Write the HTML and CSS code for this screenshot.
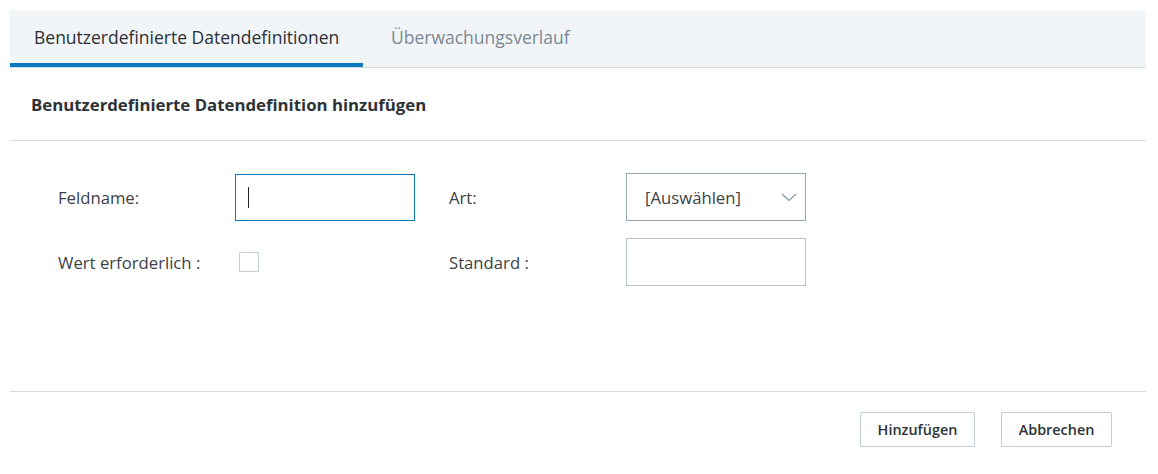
FILE: index.html
```html
<!DOCTYPE html>
<html lang="de">
<head>
<meta charset="utf-8">
<title>Benutzerdefinierte Datendefinitionen</title>
<link rel="stylesheet" href="styles.css">
</head>
<body>
<div class="panel">
  <div class="tabs">
    <div class="tab active">Benutzerdefinierte Datendefinitionen</div>
    <div class="tab">Überwachungsverlauf</div>
  </div>
  <div class="header">Benutzerdefinierte Datendefinition hinzufügen</div>
  <div class="form">
    <div class="row">
      <div class="cell">
        <label class="label">Feldname:</label>
        <div class="input focused"><span class="caret"></span></div>
      </div>
      <div class="cell">
        <label class="label">Art:</label>
        <div class="input select">
          <span>[Auswählen]</span>
          <svg class="chev" width="16" height="9" viewBox="0 0 16 9"><path d="M1 1 L8 7.5 L15 1" fill="none" stroke="#8a96a3" stroke-width="1.2"/></svg>
        </div>
      </div>
    </div>
    <div class="row">
      <div class="cell">
        <label class="label">Wert erforderlich :</label>
        <div class="check-wrap"><span class="checkbox"></span></div>
      </div>
      <div class="cell">
        <label class="label">Standard :</label>
        <div class="input"></div>
      </div>
    </div>
  </div>
  <div class="footer">
    <button class="btn">Hinzufügen</button>
    <button class="btn">Abbrechen</button>
  </div>
</div>
</body>
</html>
```

FILE: styles.css
```css
* { box-sizing: border-box; }
html, body { margin: 0; padding: 0; background: #fff; }
body {
  padding: 10px 12px 0 10px;
  font-family: "Open Sans", "Noto Sans", sans-serif;
  color: #333a40;
}
.panel { width: 1136px; }
.tabs {
  display: flex;
  background: #f1f5f8;
  border-bottom: 1px solid #d5dde3;
  height: 58px;
}
.tab {
  padding: 0 24px 0 28px;
  font-size: 17.5px;
  line-height: 55px;
  color: #7c8894;
  border-bottom: 4px solid transparent;
  height: 57px;
  white-space: nowrap;
}
.tab.active {
  width: 353px;
  padding-left: 24px;
  color: #2b3034;
  border-bottom-color: #0a78ba;
}
.header {
  padding: 0 21px;
  height: 73px;
  line-height: 73px;
  font-size: 16.8px;
  font-weight: 700;
  color: #2d3236;
  border-bottom: 1px solid #d5dde3;
}
.form {
  padding: 32px 0 0 48px;
  height: 251px;
  border-bottom: 1px solid #d5dde3;
  display: flex;
  flex-direction: column;
  gap: 17px;
}
.row { display: flex; }
.cell { display: flex; align-items: center; width: 391px; }
.label {
  width: 177px;
  font-size: 16.7px;
  color: #3b4247;
  white-space: nowrap;
}
.input {
  width: 180px;
  height: 48px;
  border: 1px solid #b9c3cc;
  background: #fff;
  display: flex;
  align-items: center;
}
.input.focused { border-color: #0a78ba; margin-top: 1px; height: 47px; }
.caret {
  display: block;
  width: 1px;
  height: 21px;
  background: #222;
  margin-left: 12px;
}
.select {
  justify-content: space-between;
  padding: 0 8px 0 18px;
  font-size: 16.7px;
  color: #3b4247;
  border-color: #96a5b3;
}
.chev { display: block; }
.check-wrap { height: 48px; display: flex; align-items: center; }
.checkbox {
  display: block;
  width: 20px;
  height: 20px;
  margin-left: 4px;
  border: 1px solid #c9d1d8;
  background: #fff;
}
.footer {
  display: flex;
  justify-content: flex-end;
  gap: 26px;
  padding: 20px 34px 0 0;
}
.btn {
  height: 35px;
  padding: 0 10px;
  font-family: "Open Sans", "Noto Sans", sans-serif;
  font-size: 14.4px;
  font-weight: 600;
  color: #2d3236;
  background: #fff;
  border: 1px solid #c3ccd4;
  border-radius: 2px;
  box-shadow: 0 1px 1px rgba(0,0,0,0.08);
  white-space: nowrap;
}
.btn:first-child { width: 115px; }
.btn:last-child { width: 111px; }
```
